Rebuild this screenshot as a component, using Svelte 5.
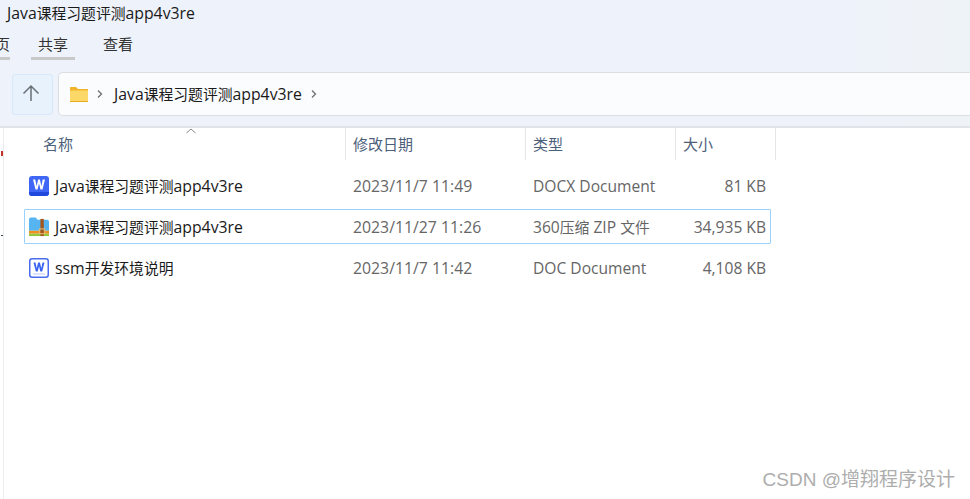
<script lang="ts">
    type Row = { name: string; date: string; kind: string; size: string; icon: string; selected?: boolean };

    const columns = [
        { label: '名称', width: 320, indent: 17 },
        { label: '修改日期', width: 180, indent: 7 },
        { label: '类型', width: 150, indent: 7 },
        { label: '大小', width: 100, indent: 7 },
    ];

    const rows: Row[] = [
        { name: 'Java课程习题评测app4v3re', date: '2023/11/7 11:49', kind: 'DOCX Document', size: '81 KB', icon: 'wps' },
        { name: 'Java课程习题评测app4v3re', date: '2023/11/27 11:26', kind: '360压缩 ZIP 文件', size: '34,935 KB', icon: 'zip', selected: true },
        { name: 'ssm开发环境说明', date: '2023/11/7 11:42', kind: 'DOC Document', size: '4,108 KB', icon: 'doc' },
    ];

    // odd pieces are the Chinese runs, they sit a bit smaller than the latin text
    const runs = (text: string) => text.split(/([\u4e00-\u9fff]+)/);
</script>

{#snippet mixed(text: string)}
    {#each runs(text) as part, i}{#if i % 2}<span class="han">{part}</span>{:else}{part}{/if}{/each}
{/snippet}

<div class="window">
    <header class="chrome">
        <div class="title">{@render mixed('Java课程习题评测app4v3re')}</div>
        <nav class="tabs">
            <span class="tab cut">页</span>
            <span class="tab active">共享</span>
            <span class="tab">查看</span>
        </nav>
        <div class="addr-row">
            <button class="up" aria-label="向上">
                <svg width="18" height="18" viewBox="0 0 18 18" fill="none">
                    <path d="M9 17V2M1.500 9.500L9 2L16.500 9.500" stroke="#6b6f76" stroke-width="1.500"/>
                </svg>
            </button>
            <div class="addr">
                <svg class="folder" width="18" height="15" viewBox="0 0 18 15">
                    <path d="M0 1.200C0 .5.500 0 1.200 0H6l2 2h9.500c.3 0 .5.200.5.500V4H0z" fill="#f0b429"/>
                    <path d="M0 3.500h18V14c0 .6-.4 1-1 1H1c-.6 0-1-.4-1-1z" fill="#fcd868"/>
                    <path d="M0 14h18v.2c0 .5-.4.8-1 .8H1c-.6 0-1-.3-1-.8z" fill="#e8a91f"/>
                </svg>
                <svg class="chev" width="8" height="10" viewBox="0 0 8 10" fill="none"><path d="M2 1.500L5.500 5L2 8.500" stroke="#6f6f6f" stroke-width="1.300"/></svg>
                <span class="crumb">{@render mixed('Java课程习题评测app4v3re')}</span>
                <svg class="chev" width="8" height="10" viewBox="0 0 8 10" fill="none"><path d="M2 1.500L5.500 5L2 8.500" stroke="#6f6f6f" stroke-width="1.300"/></svg>
            </div>
        </div>
    </header>

    <main class="list">
        <i class="mark red"></i>
        <i class="mark dark"></i>
        <div class="heads">
            <svg class="sort" width="12" height="6" viewBox="0 0 12 6" fill="none"><path d="M1.500 5L6 1L10.500 5" stroke="#8a8a8a"/></svg>
            {#each columns as col}
                <div class="head" style="width:{col.width}px;padding-left:{col.indent}px">{col.label}</div>
            {/each}
        </div>

        <div class="rows">
            {#each rows as row}
                <div class="row" class:selected={row.selected}>
                    <div class="cell name">
                        {#if row.icon === 'wps'}
                            <svg width="20" height="20" viewBox="0 0 20 20">
                                <rect width="20" height="20" rx="3" fill="#3f66f5"/>
                                <path d="M0 16h20v1c0 1.700-1.300 3-3 3H3c-1.700 0-3-1.300-3-3z" fill="#2148dc"/>
                                <path d="M4 3.500h2.300l1.300 6.800 1.500-6.800h1.800l1.500 6.800 1.300-6.800H16L13.500 13.500h-2L10 7.500 8.500 13.500h-2z" fill="#fff"/>
                            </svg>
                        {:else if row.icon === 'zip'}
                            <svg width="20" height="20" viewBox="0 0 21 20">
                                <path d="M0 2C0 .9.800 0 2 0h5l2 2.500h10c1.200 0 2 .8 2 2V14H0z" fill="#56b4f0"/>
                                <rect y="14" width="21" height="3" fill="#f0901e"/>
                                <rect y="17" width="21" height="2.500" fill="#93c83e"/>
                                <rect x="12" y="1.500" width="3.500" height="18" fill="#a0561c"/>
                                <rect x="11" y="12" width="5.500" height="5" fill="none" stroke="#e0b870" stroke-width="1.200"/>
                            </svg>
                        {:else}
                            <svg width="20" height="20" viewBox="0 0 20 20">
                                <rect x=".75" y=".75" width="18.500" height="18.500" rx="2.500" fill="#fff" stroke="#4a6df0" stroke-width="1.500"/>
                                <path d="M4.500 4.500h2l1.200 5.800 1.400-5.800h1.800l1.400 5.800 1.200-5.800h2l-2.300 9h-1.900L10 8.200 8.700 13.500H6.800z" fill="#3a63f3"/>
                                <rect x="4" y="15.500" width="12" height="1" fill="#b9c8f8"/>
                            </svg>
                        {/if}
                        <span>{@render mixed(row.name)}</span>
                    </div>
                    <div class="cell date">{row.date}</div>
                    <div class="cell kind">{@render mixed(row.kind)}</div>
                    <div class="cell size">{row.size}</div>
                </div>
            {/each}
        </div>
    </main>

    <div class="mark-text">CSDN @增翔程序设计</div>
</div>

<style>
    :global(body) {
        margin: 0;
        background: #fff;
    }

    .window {
        position: relative;
        width: 970px;
        height: 499px;
        overflow: hidden;
        font-family: "Open Sans", "Noto Sans CJK SC", sans-serif;
        color: #1a1a1a;
    }

    .han {
        font-size: 14.800px;
    }

    .chrome {
        box-sizing: border-box;
        height: 128px;
        background: linear-gradient(90deg, #eef3fb 0%, #eef2fb 85%, #eef3f6 100%);
        border-bottom: 2px solid #e0e3e8;
    }

    .title {
        height: 30px;
        padding: 3px 0 0 7px;
        box-sizing: border-box;
        font-size: 15.800px;
        line-height: 21px;
    }

    .tabs {
        display: flex;
        height: 28px;
        margin-left: -25px;
        padding-top: 3px;
        box-sizing: border-box;
        font-size: 15px;
        line-height: 23px;
        color: #333;
    }

    .tab {
        width: 44px;
        height: 27px;
        margin-right: 21px;
        text-align: center;
        box-sizing: border-box;
    }

    .tab.cut {
        width: 35px;
        margin-right: 21px;
        border-bottom: 3px solid #c9c9c9;
        text-align: right;
    }

    .tab.active {
        border-bottom: 3px solid #c9c9c9;
    }

    .addr-row {
        display: flex;
        align-items: center;
        gap: 5px;
        padding: 14px 0 0 12px;
    }

    .up {
        display: flex;
        align-items: center;
        justify-content: center;
        width: 41px;
        height: 41px;
        padding: 0 3px 3px 0;
        background: #e7f2fd;
        border: 1px solid #d6e8fa;
        border-radius: 3px;
    }

    .addr {
        display: flex;
        flex: 1;
        align-items: center;
        box-sizing: border-box;
        height: 44px;
        padding-left: 11px;
        background: #fbfcfe;
        border: 1px solid #dcdee2;
        border-right: none;
        border-radius: 5px 0 0 5px;
    }

    .chev {
        margin-left: 8px;
    }

    .crumb {
        margin-left: 10px;
        font-size: 15.800px;
        color: #1a1a1a;
    }

    .addr .chev:last-child {
        margin-left: 8px;
    }

    .list {
        position: relative;
        border-left: 1px solid #ededed;
        margin-left: 3px;
        height: 371px;
    }

    .mark {
        position: absolute;
        left: -3px;
        width: 2px;
    }

    .mark.red {
        top: 23px;
        height: 5px;
        background: #c0342c;
    }

    .mark.dark {
        top: 107px;
        height: 1px;
        background: #345;
    }

    .heads {
        position: relative;
        display: flex;
        height: 32px;
        margin-left: 22px;
    }

    .sort {
        position: absolute;
        left: 159px;
        top: 0;
    }

    .head {
        box-sizing: border-box;
        height: 32px;
        border-right: 1px solid #e6e6e6;
        font-size: 15px;
        line-height: 32px;
        color: #4c607a;
    }

    .rows {
        display: flex;
        flex-direction: column;
        gap: 6px;
        margin: 8px 0 0 20px;
    }

    .row {
        display: grid;
        grid-template-columns: 328px 180px 150px 83px;
        box-sizing: border-box;
        width: 747px;
        height: 35px;
        align-items: center;
        border: 1px solid transparent;
        border-radius: 1px;
        font-size: 15.800px;
    }

    .row.selected {
        border-color: #99d1ff;
    }

    .cell {
        white-space: nowrap;
    }

    .name {
        display: flex;
        align-items: center;
        gap: 6px;
        padding-left: 4px;
        color: #1a1a1a;
    }

    .date,
    .kind,
    .size {
        color: #666;
    }

    .kind,
    .size {
        font-size: 15.600px;
    }

    .size {
        text-align: right;
    }

    .mark-text {
        position: absolute;
        right: 15px;
        top: 468px;
        font-family: "Liberation Sans", "Noto Sans CJK SC", sans-serif;
        font-size: 19px;
        line-height: 24px;
        color: #adadad;
    }
</style>
